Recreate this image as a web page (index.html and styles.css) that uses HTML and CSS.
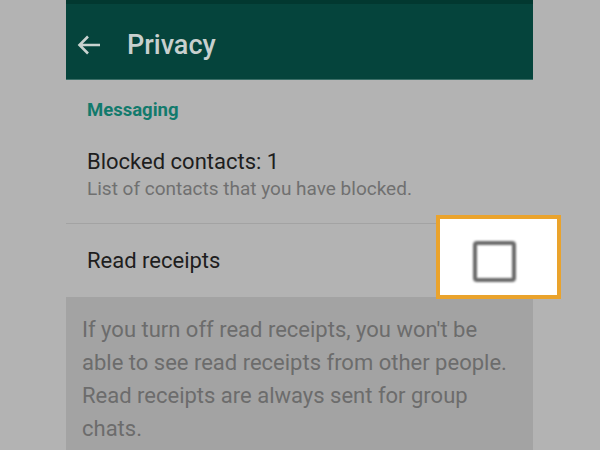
FILE: index.html
```html
<!DOCTYPE html>
<html>
<head>
<meta charset="utf-8">
<link rel="stylesheet" href="styles.css">
</head>
<body>
<div class="phone">
  <header class="appbar">
    <svg class="back" width="24" height="20" viewBox="0 0 24 20">
      <path d="M23 10H2.5M11 1.5L2.5 10l8.5 8.5" fill="none" stroke="#c9d3d0" stroke-width="2.6"/>
    </svg>
    <h1 class="title">Privacy</h1>
  </header>
  <div class="section-label">Messaging</div>
  <div class="row blocked">
    <div class="row-title">Blocked contacts: 1</div>
    <div class="row-sub">List of contacts that you have blocked.</div>
  </div>
  <div class="row receipts">
    <div class="row-title">Read receipts</div>
    <div class="highlight">
      <div class="checkbox"></div>
    </div>
  </div>
  <div class="info">
    If you turn off read receipts, you won't be able to see read receipts from other people. Read receipts are always sent for group chats.
  </div>
</div>
</body>
</html>
```
FILE: styles.css
```css
html, body {
  margin: 0;
  padding: 0;
}
body {
  width: 600px;
  height: 450px;
  overflow: hidden;
  background: #b3b3b3;
  font-family: Roboto, "Liberation Sans", sans-serif;
}
.phone {
  margin-left: 66px;
  width: 467px;
  display: flex;
  flex-direction: column;
}
.appbar {
  height: 68px;
  padding-top: 7px;
  background: #05443c;
  border-top: 4px solid #023830;
  border-bottom: 1px solid #3b6e67;
  display: flex;
  align-items: center;
  padding-left: 11px;
}
.back {
  display: block;
}
.title {
  margin: 0 0 0 26px;
  font-size: 27px;
  line-height: 32px;
  font-weight: 500;
  color: #c8d0ce;
}
.section-label {
  padding: 19px 0 0 21px;
  line-height: 22px;
  font-size: 18.5px;
  font-weight: 700;
  color: #127a6c;
}
.row {
  padding-left: 21px;
  position: relative;
}
.blocked {
  padding-top: 28px;
  height: 103px;
  box-sizing: border-box;
  border-bottom: 1px solid #a3a3a3;
}
.row-title {
  font-size: 22px;
  line-height: 26px;
  color: #1e1e1e;
}
.row-sub {
  font-size: 19px;
  line-height: 22px;
  color: #707070;
  margin-top: 3px;
}
.receipts {
  height: 73px;
  display: flex;
  align-items: center;
}
.highlight {
  position: absolute;
  left: 370px;
  top: -9px;
  width: 117px;
  height: 76px;
  border: 4px solid #eaa32c;
  background: #fff;
  display: flex;
  align-items: center;
  justify-content: center;
}
.checkbox {
  width: 35px;
  height: 33px;
  border: 4px solid #686868;
  border-radius: 4px;
  filter: blur(0.9px);
  margin: 9px 8px 0 0;
}
.info {
  background: #a3a3a3;
  padding: 16px 20px 0 16px;
  font-size: 22px;
  line-height: 33px;
  color: #6c6c6c;
  height: 153px;
  box-sizing: border-box;
  overflow: hidden;
}
```
